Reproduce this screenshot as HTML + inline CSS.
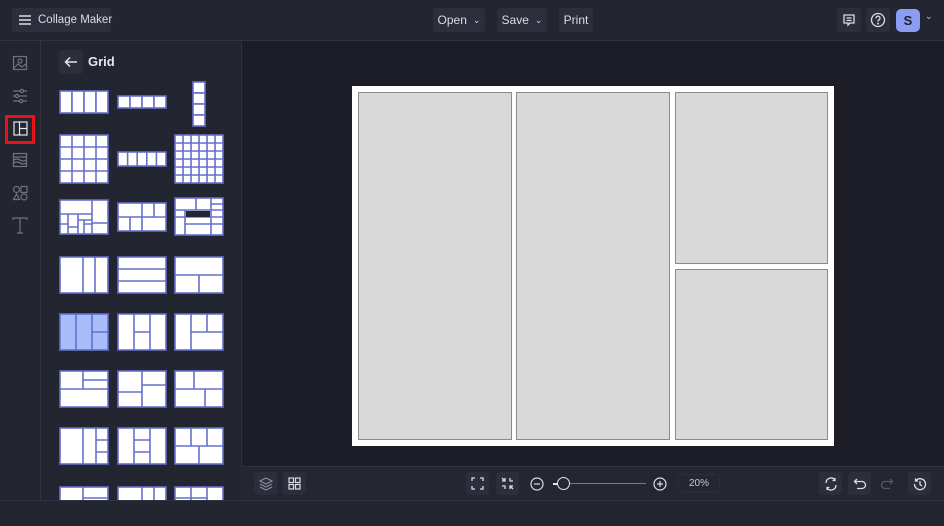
<!DOCTYPE html>
<html><head><meta charset="utf-8"><style>
*{margin:0;padding:0;box-sizing:border-box}
body{width:944px;height:526px;background:#232531;font-family:"Liberation Sans",sans-serif;color:#e6e7ea;position:relative;overflow:hidden}
.a{position:absolute}
.btn{position:absolute;background:#2c2f3b;border-radius:4px;font-size:12px;color:#dcdde2;display:flex;align-items:center;justify-content:center;white-space:nowrap}
svg.t{position:absolute}
svg.t rect{fill:#fff;stroke:#6670cc;stroke-width:1.6}
svg.i{position:absolute;fill:none;stroke:#6f7382;stroke-width:1.2}
</style></head><body>
<!-- header -->
<div class="a" style="left:0;top:40px;width:944px;height:1px;background:#303340"></div>
<div class="btn" style="left:12px;top:8px;width:99px;height:24px;justify-content:flex-start;padding-left:6px;font-size:11.5px">
<svg width="14" height="12" style="margin-right:6px;flex:none" stroke="#dcdde2" stroke-width="1.4"><path d="M1 2H13M1 6H13M1 10H13"/></svg>Collage Maker</div>
<div class="btn" style="left:433px;top:8px;width:52px;height:24px">Open <span style="font-size:9px;margin-left:6px">&#8964;</span></div>
<div class="btn" style="left:497px;top:8px;width:50px;height:24px">Save <span style="font-size:9px;margin-left:6px">&#8964;</span></div>
<div class="btn" style="left:559px;top:8px;width:34px;height:24px">Print</div>
<div class="btn" style="left:837px;top:8px;width:24px;height:24px"><svg width="14" height="14" fill="none" stroke="#dcdde2" stroke-width="1.3"><path d="M2 2H12V10H8L6 12V10H2Z M4.5 5H9.5M4.5 7.5H9.5"/></svg></div>
<div class="btn" style="left:866px;top:8px;width:24px;height:24px"><svg width="16" height="16" fill="none" stroke="#dcdde2" stroke-width="1.3"><circle cx="8" cy="8" r="6.5"/><path d="M6 6.3a2 2 0 1 1 2.5 1.8c-.5.2-.5.6-.5 1.4"/><circle cx="8" cy="11.5" r=".4"/></svg></div>
<div class="a" style="left:896px;top:9px;width:24px;height:23px;background:#8b9cf5;border-radius:5px;color:#1b1d2a;font-weight:bold;font-size:13px;display:flex;align-items:center;justify-content:center">S</div>
<div class="a" style="left:925px;top:11px;font-size:9px;color:#ccc">&#8964;</div>
<!-- left rail -->
<div class="a" style="left:40px;top:41px;width:1px;height:460px;background:#303340"></div>
<svg class="i" style="left:12px;top:55px" width="16" height="16"><rect x="1.5" y="1.5" width="13" height="13"/><circle cx="8" cy="6" r="2"/><path d="M2 13L6 9L10 12L14 9"/></svg>
<svg class="i" style="left:12px;top:88px" width="16" height="16"><path d="M1 3H15M1 8H15M1 13H15"/><circle cx="10" cy="3" r="1.6" fill="#232531"/><circle cx="5" cy="8" r="1.6" fill="#232531"/><circle cx="9" cy="13" r="1.6" fill="#232531"/></svg>
<div class="a" style="left:5px;top:115px;width:30px;height:29px;border:3px solid #e8121a"></div>
<svg class="i" style="left:13px;top:121px;stroke:#e6e7ea" width="15" height="15"><rect x="1" y="1" width="13" height="13"/><path d="M6.5 1V14M6.5 7.5H14"/></svg>
<svg class="i" style="left:12px;top:152px" width="16" height="16"><rect x="1.5" y="1.5" width="13" height="13"/><path d="M2 5H14M2 8Q5 6 8 8T14 8M2 11Q5 9 8 11T14 11"/></svg>
<svg class="i" style="left:12px;top:185px" width="16" height="16"><circle cx="4.5" cy="4.5" r="3"/><rect x="9" y="1.5" width="6" height="6"/><path d="M4.5 9L1.5 14.5H7.5Z"/><circle cx="12" cy="12" r="3"/></svg>
<svg class="i" style="left:12px;top:217px" width="16" height="17"><path d="M1 3V1H15V3M8 1V16M5 16H11"/></svg>
<!-- panel -->
<div class="btn" style="left:59px;top:50px;width:24px;height:24px"><svg width="14" height="12" fill="none" stroke="#e6e7ea" stroke-width="1.5"><path d="M13 6H2M6 1.5L1.5 6L6 10.5"/></svg></div>
<div class="a" style="left:88px;top:54px;font-size:13px;font-weight:bold">Grid</div>

<svg class="t" style="left:59px;top:90px" width="50" height="24"><rect x="1" y="1" width="12" height="22"/><rect x="13" y="1" width="12" height="22"/><rect x="25" y="1" width="12" height="22"/><rect x="37" y="1" width="12" height="22"/></svg>
<svg class="t" style="left:117px;top:95px" width="50" height="14"><rect x="1" y="1" width="12" height="12"/><rect x="13" y="1" width="12" height="12"/><rect x="25" y="1" width="12" height="12"/><rect x="37" y="1" width="12" height="12"/></svg>
<svg class="t" style="left:192px;top:81px" width="14" height="46"><rect x="1" y="1" width="12" height="11"/><rect x="1" y="12" width="12" height="11"/><rect x="1" y="23" width="12" height="11"/><rect x="1" y="34" width="12" height="11"/></svg>

<svg class="t" style="left:59px;top:134px" width="50" height="50"><rect x="1" y="1" width="48" height="48"/><path d="M13 1V49M25 1V49M37 1V49M1 13H49M1 25H49M1 37H49" stroke="#6670cc" stroke-width="1.6"/></svg>
<svg class="t" style="left:117px;top:151px" width="50" height="16"><rect x="1" y="1" width="48" height="14"/><path d="M10.6 1V15M20.2 1V15M29.8 1V15M39.4 1V15" stroke="#6670cc" stroke-width="1.6"/></svg>
<svg class="t" style="left:174px;top:134px" width="50" height="50"><rect x="1" y="1" width="48" height="48"/><path d="M9 1V49M17 1V49M25 1V49M33 1V49M41 1V49M1 9H49M1 17H49M1 25H49M1 33H49M1 41H49" stroke="#6670cc" stroke-width="1.6"/></svg>

<svg class="t" style="left:59px;top:199px" width="50" height="36"><rect x="1" y="1" width="48" height="34"/><path d="M33 1V35M1 15H33M33 24H49M9 15V35M1 25H9M19 15V35M9 28H19M19 21H33M25 21V35M25 25H33" stroke="#6670cc" stroke-width="1.6"/></svg>
<svg class="t" style="left:117px;top:202px" width="50" height="30"><rect x="1" y="1" width="48" height="28"/><path d="M25 1V15M37 1V15M1 15H49M13 15V29M25 15V29" stroke="#6670cc" stroke-width="1.6"/></svg>
<svg class="t" style="left:174px;top:197px" width="50" height="39"><rect x="1" y="1" width="48" height="37"/><path d="M1 13H49M22 1V13M37 1V38M37 7H49M37 20H49M1 20H37M11 13V38M11 27H37M37 27H49" stroke="#6670cc" stroke-width="1.6"/><rect x="12" y="14" width="24" height="6" style="fill:#232531;stroke:none"/></svg>

<svg class="t" style="left:59px;top:256px" width="50" height="38"><rect x="1" y="1" width="48" height="36"/><path d="M24 1V37M36 1V37" stroke="#6670cc" stroke-width="1.6"/></svg>
<svg class="t" style="left:117px;top:256px" width="50" height="38"><rect x="1" y="1" width="48" height="36"/><path d="M1 13H49M1 25H49" stroke="#6670cc" stroke-width="1.6"/></svg>
<svg class="t" style="left:174px;top:256px" width="50" height="38"><rect x="1" y="1" width="48" height="36"/><path d="M1 19H49M25 19V37" stroke="#6670cc" stroke-width="1.6"/></svg>

<svg class="t" style="left:59px;top:313px" width="50" height="38"><rect x="1" y="1" width="48" height="36" style="fill:#aabdfb"/><path d="M17 1V37M33 1V37M33 19H49" stroke="#6670cc" stroke-width="1.6"/></svg>
<svg class="t" style="left:117px;top:313px" width="50" height="38"><rect x="1" y="1" width="48" height="36"/><path d="M17 1V37M33 1V37M17 19H33" stroke="#6670cc" stroke-width="1.6"/></svg>
<svg class="t" style="left:174px;top:313px" width="50" height="38"><rect x="1" y="1" width="48" height="36"/><path d="M17 1V37M17 19H49M33 1V19" stroke="#6670cc" stroke-width="1.6"/></svg>

<svg class="t" style="left:59px;top:370px" width="50" height="38"><rect x="1" y="1" width="48" height="36"/><path d="M1 19H49M24 1V19M24 10H49" stroke="#6670cc" stroke-width="1.6"/></svg>
<svg class="t" style="left:117px;top:370px" width="50" height="38"><rect x="1" y="1" width="48" height="36"/><path d="M25 1V37M25 15H49M1 22H25" stroke="#6670cc" stroke-width="1.6"/></svg>
<svg class="t" style="left:174px;top:370px" width="50" height="38"><rect x="1" y="1" width="48" height="36"/><path d="M1 19H49M20 1V19M31 19V37" stroke="#6670cc" stroke-width="1.6"/></svg>

<svg class="t" style="left:59px;top:427px" width="50" height="38"><rect x="1" y="1" width="48" height="36"/><path d="M24 1V37M37 1V37M37 13H49M37 25H49" stroke="#6670cc" stroke-width="1.6"/></svg>
<svg class="t" style="left:117px;top:427px" width="50" height="38"><rect x="1" y="1" width="48" height="36"/><path d="M17 1V37M33 1V37M17 13H33M17 25H33" stroke="#6670cc" stroke-width="1.6"/></svg>
<svg class="t" style="left:174px;top:427px" width="50" height="38"><rect x="1" y="1" width="48" height="36"/><path d="M1 19H49M17 1V19M33 1V19M25 19V37" stroke="#6670cc" stroke-width="1.6"/></svg>

<svg class="t" style="left:59px;top:486px" width="50" height="15"><rect x="1" y="1" width="48" height="20"/><path d="M24 1V15M24 12H49" stroke="#6670cc" stroke-width="1.6"/></svg>
<svg class="t" style="left:117px;top:486px" width="50" height="15"><rect x="1" y="1" width="48" height="20"/><path d="M25 1V15M37 1V15" stroke="#6670cc" stroke-width="1.6"/></svg>
<svg class="t" style="left:174px;top:486px" width="50" height="15"><rect x="1" y="1" width="48" height="20"/><path d="M17 1V15M33 1V15M1 12H33" stroke="#6670cc" stroke-width="1.6"/></svg>

<!-- canvas -->
<div class="a" style="left:241px;top:41px;width:703px;height:425px;background:#1c1d27;border-left:1px solid #2f323d"></div>
<div class="a" style="left:352px;top:86px;width:482px;height:360px;background:#fff"></div>
<div class="a" style="left:358px;top:92px;width:154px;height:348px;background:#d9d9d9;border:1px solid #8a8a8a"></div>
<div class="a" style="left:516px;top:92px;width:154px;height:348px;background:#d9d9d9;border:1px solid #8a8a8a"></div>
<div class="a" style="left:675px;top:92px;width:153px;height:172px;background:#d9d9d9;border:1px solid #8a8a8a"></div>
<div class="a" style="left:675px;top:269px;width:153px;height:171px;background:#d9d9d9;border:1px solid #8a8a8a"></div>
<!-- bottom toolbar -->
<div class="a" style="left:241px;top:466px;width:703px;height:35px;background:#242631;border-top:1px solid #30333f;border-bottom:1px solid #30333f"></div>
<div class="a" style="left:0;top:500px;width:944px;height:1px;background:#30333f"></div>
<div class="btn" style="left:254px;top:472px;width:23px;height:23px"><svg width="14" height="14" fill="none" stroke="#8a8e9c" stroke-width="1.1"><path d="M7 1L13 4L7 7L1 4Z M1 7L7 10L13 7M1 10L7 13L13 10"/></svg></div>
<div class="btn" style="left:283px;top:472px;width:23px;height:23px"><svg width="13" height="13" fill="none" stroke="#dcdde2" stroke-width="1.2"><rect x="1" y="1" width="4.5" height="4.5"/><rect x="7.5" y="1" width="4.5" height="4.5"/><rect x="1" y="7.5" width="4.5" height="4.5"/><rect x="7.5" y="7.5" width="4.5" height="4.5"/></svg></div>
<div class="btn" style="left:466px;top:472px;width:23px;height:23px"><svg width="13" height="13" fill="none" stroke="#dcdde2" stroke-width="1.3"><path d="M1 4V1H4M9 1H12V4M12 9V12H9M4 12H1V9"/></svg></div>
<div class="btn" style="left:496px;top:472px;width:23px;height:23px"><svg width="13" height="13" fill="none" stroke="#dcdde2" stroke-width="1.3"><path d="M1 4H4V1M9 1V4H12M12 9H9V12M4 12V9H1M1 1L4 4M12 12L9 9"/></svg></div>
<svg class="a" style="left:529px;top:476px" width="16" height="16" fill="none" stroke="#dcdde2" stroke-width="1.2"><circle cx="8" cy="8" r="6"/><path d="M5 8H11"/></svg>
<div class="a" style="left:553px;top:483px;width:93px;height:1px;background:#7a7d88"></div>
<div class="a" style="left:553px;top:483px;width:6px;height:2px;background:#e6e7ea"></div>
<div class="a" style="left:557px;top:477px;width:13px;height:13px;border:1.5px solid #e6e7ea;border-radius:50%;background:#242631"></div>
<svg class="a" style="left:652px;top:476px" width="16" height="16" fill="none" stroke="#dcdde2" stroke-width="1.2"><circle cx="8" cy="8" r="6"/><path d="M5 8H11M8 5V11"/></svg>
<div class="a" style="left:678px;top:474px;width:42px;height:18px;border:1px solid #2c2f3b;border-radius:3px;font-size:10px;color:#c8c9ce;text-align:center;line-height:17px">20%</div>
<div class="btn" style="left:819px;top:472px;width:23px;height:23px"><svg width="14" height="14" fill="none" stroke="#dcdde2" stroke-width="1.3"><path d="M11 3A5 5 0 0 0 2 6M3 11A5 5 0 0 0 12 8M11 1V3.5H8.5M3 13V10.5H5.5"/></svg></div>
<div class="btn" style="left:848px;top:472px;width:23px;height:23px"><svg width="14" height="14" fill="none" stroke="#dcdde2" stroke-width="1.3"><path d="M4 2L1.5 4.5L4 7M1.5 4.5H9A3.5 3.5 0 0 1 9 11.5H4"/></svg></div>
<div class="a" style="left:880px;top:477px"><svg width="14" height="14" fill="none" stroke="#555866" stroke-width="1.3"><path d="M10 2L12.5 4.5L10 7M12.5 4.5H5A3.5 3.5 0 0 0 5 11.5H10"/></svg></div>
<div class="btn" style="left:908px;top:472px;width:23px;height:23px"><svg width="14" height="14" fill="none" stroke="#dcdde2" stroke-width="1.3"><path d="M2.5 4A5.5 5.5 0 1 1 1.5 7M2.5 1.5V4H5M7 4V7.5L9 9"/></svg></div>
</body></html>
